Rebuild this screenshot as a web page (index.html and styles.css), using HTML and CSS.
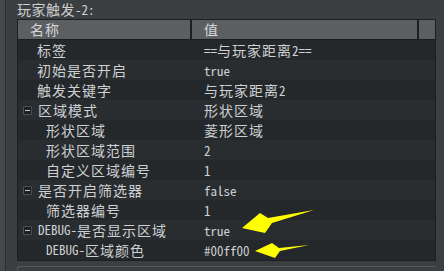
FILE: index.html
```html
<!DOCTYPE html>
<html lang="zh">
<head>
    <meta charset="UTF-8">
    <title>玩家触发-2</title>
    <link rel="stylesheet" href="styles.css">
</head>
<body>
    <div class="app">
        <div class="side"></div>
        <div class="panel">
            <div class="title">玩家触发<span class="en">-2:</span></div>
            <div class="table">
                <div class="head">
                    <div class="c-name">名称</div>
                    <div class="c-val">值</div>
                    <div class="c-pad"></div>
                </div>
                <div class="row lv1"><div class="c-name">标签</div><div class="c-val"><span class="en">==</span>与玩家距离<span class="en">2==</span></div></div>
                <div class="row lv1"><div class="c-name">初始是否开启</div><div class="c-val"><span class="en">true</span></div></div>
                <div class="row lv1"><div class="c-name">触发关键字</div><div class="c-val">与玩家距离<span class="en">2</span></div></div>
                <div class="row grp"><div class="c-name"><span class="box"></span>区域模式</div><div class="c-val">形状区域</div></div>
                <div class="row lv2"><div class="c-name">形状区域</div><div class="c-val">菱形区域</div></div>
                <div class="row lv2"><div class="c-name">形状区域范围</div><div class="c-val"><span class="en">2</span></div></div>
                <div class="row lv2"><div class="c-name">自定义区域编号</div><div class="c-val"><span class="en">1</span></div></div>
                <div class="row grp"><div class="c-name"><span class="box"></span>是否开启筛选器</div><div class="c-val"><span class="en">false</span></div></div>
                <div class="row lv2"><div class="c-name">筛选器编号</div><div class="c-val"><span class="en">1</span></div></div>
                <div class="row grp"><div class="c-name"><span class="box"></span><span class="en">DEBUG-</span>是否显示区域</div><div class="c-val"><span class="en">true</span></div></div>
                <div class="row lv2"><div class="c-name"><span class="en">DEBUG-</span>区域颜色</div><div class="c-val"><span class="en">#00ff00</span></div></div>
            </div>
            <div class="next"></div>
        </div>
    </div>
    <!-- annotation arrows drawn over the table -->
    <svg class="arrows" width="444" height="271" viewBox="0 0 444 271">
        <polygon points="242,228 260,213 268,218 314,210 272,223 265,233" fill="#ffff00"/>
        <polygon points="255,251 272,243 279,248 309,245 280,251 275,258" fill="#ffff00"/>
    </svg>
</body>
</html>
```

FILE: styles.css
```css
* {
    box-sizing: border-box;
}
body {
    margin: 0;
    background-color: #3c3f41;
    color: #cdd1d4;
    font-family: "Noto Sans CJK SC", sans-serif;
    font-size: 14px;
    overflow: hidden;
}
.app {
    display: flex;
    height: 271px;
}
.side {
    width: 6px;
    background-color: #45484a;
    border-right: 1px solid #2b2d2f;
}
.panel {
    padding-left: 11px;
    width: 430px;
}
.title {
    height: 19px;
    line-height: 19px;
    letter-spacing: 0.5px;
    color: #cfcfcf;
}
.en {
    font-family: "Noto Sans Mono CJK SC", "DejaVu Sans Mono", monospace;
    font-size: 13px;
    letter-spacing: 0;
}
.table {
    border: 1px solid #1c1e20;
    background-color: #25282a;
}
.head {
    display: flex;
    height: 20px;
    line-height: 19px;
    background-color: #5b5f62;
    border-bottom: 1px solid #1c1e20;
    letter-spacing: 1px;
    color: #d6d8da;
}
.head .c-name {
    width: 174px;
    padding-left: 12px;
    border-right: 2px solid #1c1e20;
}
.head .c-val {
    width: 227px;
    padding-left: 12px;
    border-right: 2px solid #1c1e20;
}
.head .c-pad {
    flex: 1;
}
.row {
    display: flex;
    height: 20px;
    line-height: 20px;
    letter-spacing: 1px;
}
.row:nth-child(odd) {
    background-color: #2a2d30;
}
.row .c-name {
    width: 174px;
    display: flex;
    align-items: center;
}
.row .c-val {
    padding-left: 12px;
}
.lv1 .c-name {
    padding-left: 19px;
}
.lv2 .c-name {
    padding-left: 28px;
}
.grp .c-name {
    padding-left: 5px;
}
.box {
    width: 9px;
    height: 9px;
    margin-right: 6px;
    border: 1px solid #4d5053;
    border-radius: 1px;
    background-color: #1d1f21;
    display: flex;
    align-items: center;
    justify-content: center;
}
.box::after {
    content: "";
    width: 5px;
    height: 1px;
    background-color: #c8cbce;
}
.next {
    margin-top: 5px;
    height: 10px;
    border-top: 1px solid #55585b;
    border-left: 1px solid #55585b;
    border-top-left-radius: 3px;
}
.arrows {
    position: absolute;
    left: 0;
    top: 0;
}
```
